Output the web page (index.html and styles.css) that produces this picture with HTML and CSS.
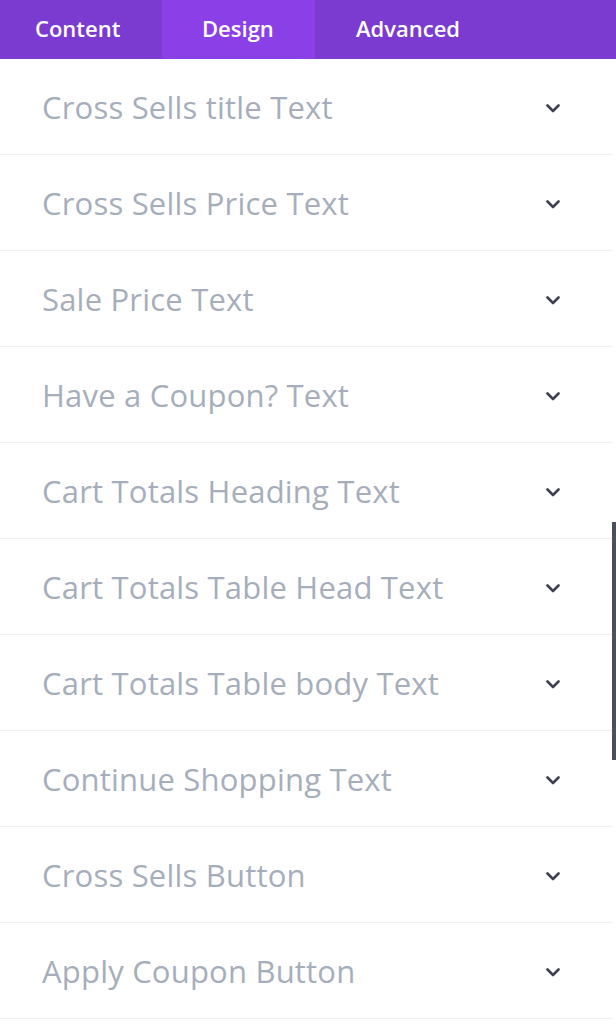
FILE: index.html
```html
<!DOCTYPE html>
<html>
<head>
<meta charset="utf-8">
<link rel="stylesheet" href="styles.css">
</head>
<body>
<div class="panel">
  <nav class="tabs">
    <div class="tab tab-content">Content</div>
    <div class="tab tab-design active">Design</div>
    <div class="tab tab-advanced">Advanced</div>
  </nav>
  <ul class="list">
    <li class="row"><span class="label">Cross Sells title Text</span><svg class="chev" viewBox="0 0 14 9"><path d="M1.5 1.5 L7 7 L12.5 1.5"/></svg></li>
    <li class="row"><span class="label">Cross Sells Price Text</span><svg class="chev" viewBox="0 0 14 9"><path d="M1.5 1.5 L7 7 L12.5 1.5"/></svg></li>
    <li class="row"><span class="label">Sale Price Text</span><svg class="chev" viewBox="0 0 14 9"><path d="M1.5 1.5 L7 7 L12.5 1.5"/></svg></li>
    <li class="row"><span class="label">Have a Coupon? Text</span><svg class="chev" viewBox="0 0 14 9"><path d="M1.5 1.5 L7 7 L12.5 1.5"/></svg></li>
    <li class="row"><span class="label">Cart Totals Heading Text</span><svg class="chev" viewBox="0 0 14 9"><path d="M1.5 1.5 L7 7 L12.5 1.5"/></svg></li>
    <li class="row"><span class="label">Cart Totals Table Head Text</span><svg class="chev" viewBox="0 0 14 9"><path d="M1.5 1.5 L7 7 L12.5 1.5"/></svg></li>
    <li class="row"><span class="label">Cart Totals Table body Text</span><svg class="chev" viewBox="0 0 14 9"><path d="M1.5 1.5 L7 7 L12.5 1.5"/></svg></li>
    <li class="row"><span class="label">Continue Shopping Text</span><svg class="chev" viewBox="0 0 14 9"><path d="M1.5 1.5 L7 7 L12.5 1.5"/></svg></li>
    <li class="row"><span class="label">Cross Sells Button</span><svg class="chev" viewBox="0 0 14 9"><path d="M1.5 1.5 L7 7 L12.5 1.5"/></svg></li>
    <li class="row"><span class="label">Apply Coupon Button</span><svg class="chev" viewBox="0 0 14 9"><path d="M1.5 1.5 L7 7 L12.5 1.5"/></svg></li>
  </ul>
  <div class="scrollbar"></div>
</div>
</body>
</html>
```
FILE: styles.css
```css
* { box-sizing: border-box; }
html, body { margin: 0; padding: 0; background: #fff; }
body { font-family: "Open Sans", "Noto Sans", sans-serif; }
.panel { position: relative; width: 616px; height: 1024px; overflow: hidden; background: #fff; }
.tabs { display: flex; height: 59px; background: #7b3bd1; }
.tab { display: flex; align-items: center; color: #fff; font-size: 22px; font-weight: 600; height: 100%; padding-bottom: 3px; }
.tab-content { width: 162px; padding-left: 35px; }
.tab-design { width: 153px; padding-left: 40px; background: #8b40e7; }
.tab-advanced { padding-left: 41px; }
.list { list-style: none; margin: 0; padding: 0; width: 612px; }
.row { display: flex; align-items: center; justify-content: space-between; height: 96px; padding: 0 52px 0 42px; border-bottom: 1px solid #f0f0f2; }
.label { font-size: 31px; color: #a6aebb; letter-spacing: 0.2px; }
.chev { width: 14px; height: 9px; margin-top: 3px; fill: none; stroke: #3c4250; stroke-width: 2.6; stroke-linecap: round; stroke-linejoin: round; }
.scrollbar { position: absolute; left: 612px; top: 522px; width: 4px; height: 238px; background: #4b505c; }
```
